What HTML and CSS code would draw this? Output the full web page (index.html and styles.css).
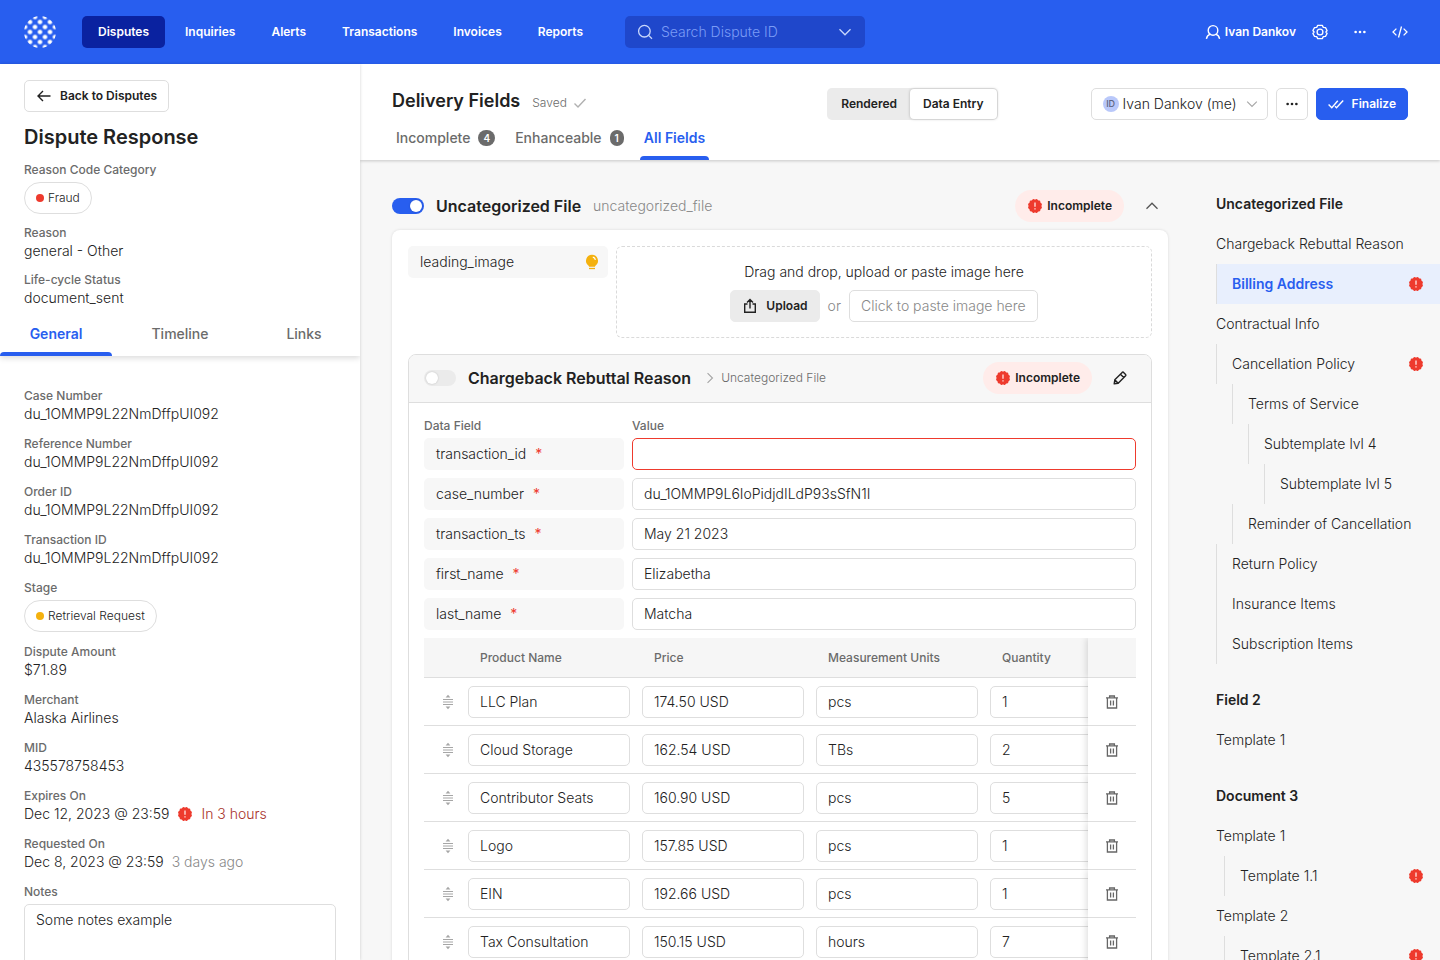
FILE: index.html
```html
<!DOCTYPE html>
<html lang="en">
<head>
    <meta charset="UTF-8">
    <meta name="viewport" content="width=device-width, initial-scale=1.0">
    <title>Dispute Response</title>
    <link rel="stylesheet" href="styles.css">
</head>
<body>
    <!-- Shared icons -->
    <svg class="sprite" aria-hidden="true">
        <symbol id="alert" viewBox="0 0 16 16">
            <g fill="#ee3a2d">
                <rect x="2.6" y="2.6" width="10.8" height="10.8" rx="1.3"/>
                <rect x="2.6" y="2.6" width="10.8" height="10.8" rx="1.3" transform="rotate(30 8 8)"/>
                <rect x="2.6" y="2.6" width="10.8" height="10.8" rx="1.3" transform="rotate(60 8 8)"/>
            </g>
            <path d="M8 4.6v4.2M8 10.2v1.3" stroke="#ffd9d5" stroke-width="1.4"/>
        </symbol>
        <symbol id="chevron" viewBox="0 0 16 16">
            <path d="M2.5 5.2 8 10.8l5.5-5.6" fill="none" stroke="currentColor" stroke-width="1.3"/>
        </symbol>
        <symbol id="dots" viewBox="0 0 16 16">
            <g fill="currentColor"><circle cx="3" cy="8" r="1.5"/><circle cx="8" cy="8" r="1.5"/><circle cx="13" cy="8" r="1.5"/></g>
        </symbol>
        <symbol id="drag" viewBox="0 0 16 16">
            <path d="M3 5.5h10M3 8h10M3 10.5h10" stroke="currentColor" stroke-width="1"/>
            <path d="M8 .8 10.4 3.4H5.6zM8 15.2l2.4-2.6H5.6z" fill="currentColor"/>
        </symbol>
        <symbol id="trash" viewBox="0 0 16 16">
            <path d="M2 3.9h12M5.6 3.7V2h4.8v1.7M3.4 4v10h9.2V4M6.6 6.5v5M9.4 6.5v5" fill="none" stroke="currentColor" stroke-width="1.3"/>
        </symbol>
    </svg>

    <header class="topbar">
        <a href="#" class="logo" aria-label="Home">
            <svg width="32" height="32" viewBox="0 0 32 32">
                <defs>
                    <pattern id="logoDots" x="3.5" y="3.5" width="10" height="10" patternUnits="userSpaceOnUse">
                        <circle cx="2.5" cy="2.5" r="2.3" fill="#fff"/>
                        <circle cx="7.5" cy="7.5" r="2.3" fill="#fff"/>
                    </pattern>
                </defs>
                <circle cx="16" cy="16" r="16" fill="url(#logoDots)"/>
            </svg>
        </a>
        <nav class="nav">
            <a href="#" class="active">Disputes</a>
            <a href="#">Inquiries</a>
            <a href="#">Alerts</a>
            <a href="#">Transactions</a>
            <a href="#">Invoices</a>
            <a href="#">Reports</a>
        </nav>
        <div class="search">
            <svg width="16" height="16" viewBox="0 0 16 16" fill="none" stroke="currentColor" stroke-width="1.3"><circle cx="7.4" cy="7.2" r="5.8"/><path d="m11.6 11.4 3.4 3.4"/></svg>
            <input type="search" placeholder="Search Dispute ID" aria-label="Search Dispute ID">
            <button type="button" aria-label="Search options"><svg width="16" height="16"><use href="#chevron"/></svg></button>
        </div>
        <div class="account">
            <button type="button" class="user">
                <svg width="16" height="16" viewBox="0 0 16 16" fill="none" stroke="currentColor" stroke-width="1.4"><circle cx="8" cy="6.4" r="4.8"/><path d="M1.4 14.8c.5-2.6 2-4 4-4.6M14.6 14.8c-.5-2.6-2-4-4-4.6"/></svg>
                Ivan Dankov
            </button>
            <button type="button" class="icon-btn" aria-label="Settings">
                <svg width="16" height="16" viewBox="0 0 16 16" fill="none" stroke="currentColor" stroke-width="1.3" stroke-linejoin="round"><circle cx="8" cy="8" r="2.9"/><path d="M5.7 1.4h4.6l1 2 2.2.2 1.6 2.9L13.9 8l1.2 1.5-1.6 2.9-2.2.2-1 2H5.7l-1-2-2.2-.2L.9 9.5 2.1 8 .9 6.5l1.6-2.9 2.2-.2z"/></svg>
            </button>
            <button type="button" class="icon-btn" aria-label="More"><svg width="14" height="14"><use href="#dots"/></svg></button>
            <button type="button" class="icon-btn" aria-label="Developer">
                <svg width="16" height="16" viewBox="0 0 16 16" fill="none" stroke="currentColor" stroke-width="1.3"><path d="M4.4 4.6 1 8l3.4 3.4M11.6 4.6 15 8l-3.4 3.4M9.5 2.5l-3 11"/></svg>
            </button>
        </div>
    </header>

    <div class="layout">
        <aside class="sidebar">
            <div class="summary">
                <a href="#" class="btn back">
                    <svg width="16" height="16" viewBox="0 0 16 16" fill="none" stroke="currentColor" stroke-width="1.4"><path d="M14.5 8h-12M7 3 2 8l5 5"/></svg>
                    Back to Disputes
                </a>
                <h1>Dispute Response</h1>
                <div class="field">
                    <h3>Reason Code Category</h3>
                    <span class="chip"><i class="dot red"></i>Fraud</span>
                </div>
                <div class="field">
                    <h3>Reason</h3>
                    <p>general - Other</p>
                </div>
                <div class="field">
                    <h3>Life-cycle Status</h3>
                    <p>document_sent</p>
                </div>
            </div>
            <nav class="side-tabs">
                <a href="#" class="active">General</a>
                <a href="#">Timeline</a>
                <a href="#">Links</a>
            </nav>
            <div class="details">
                <div class="field">
                    <h3>Case Number</h3>
                    <p>du_1OMMP9L22NmDffpUI092</p>
                </div>
                <div class="field">
                    <h3>Reference Number</h3>
                    <p>du_1OMMP9L22NmDffpUI092</p>
                </div>
                <div class="field">
                    <h3>Order ID</h3>
                    <p>du_1OMMP9L22NmDffpUI092</p>
                </div>
                <div class="field">
                    <h3>Transaction ID</h3>
                    <p>du_1OMMP9L22NmDffpUI092</p>
                </div>
                <div class="field">
                    <h3>Stage</h3>
                    <span class="chip"><i class="dot yellow"></i>Retrieval Request</span>
                </div>
                <div class="field">
                    <h3>Dispute Amount</h3>
                    <p>$71.89</p>
                </div>
                <div class="field">
                    <h3>Merchant</h3>
                    <p>Alaska Airlines</p>
                </div>
                <div class="field">
                    <h3>MID</h3>
                    <p>435578758453</p>
                </div>
                <div class="field">
                    <h3>Expires On</h3>
                    <p>Dec 12, 2023 @ 23:59 <svg width="16" height="16"><use href="#alert"/></svg> <span class="danger">In 3 hours</span></p>
                </div>
                <div class="field">
                    <h3>Requested On</h3>
                    <p>Dec 8, 2023 @ 23:59 <span class="muted">3 days ago</span></p>
                </div>
                <div class="field">
                    <label for="notes">Notes</label>
                    <textarea id="notes" rows="5">Some notes example</textarea>
                </div>
            </div>
        </aside>

        <main class="main">
            <div class="page-head">
                <div class="page-title">
                    <div class="title-row">
                        <h2>Delivery Fields</h2>
                        <span class="saved">Saved <svg width="14" height="14" viewBox="0 0 14 14" fill="none" stroke="#b0b0b0" stroke-width="1.4"><path d="m1.5 7.5 3.5 3.5 7.5-8"/></svg></span>
                    </div>
                    <nav class="tabs">
                        <a href="#">Incomplete <span class="count">4</span></a>
                        <a href="#">Enhanceable <span class="count">1</span></a>
                        <a href="#" class="active">All Fields</a>
                    </nav>
                </div>
                <div class="segmented">
                    <label><input type="radio" name="view"><span>Rendered</span></label>
                    <label><input type="radio" name="view" checked><span>Data Entry</span></label>
                </div>
                <div class="actions">
                    <div class="assignee">
                        <span class="avatar">ID</span>
                        <select aria-label="Assignee">
                            <option>Ivan Dankov (me)</option>
                        </select>
                        <svg width="14" height="14"><use href="#chevron"/></svg>
                    </div>
                    <button type="button" class="btn square" aria-label="More actions"><svg width="14" height="14"><use href="#dots"/></svg></button>
                    <button type="button" class="btn primary">
                        <svg width="16" height="16" viewBox="0 0 16 16" fill="none" stroke="currentColor" stroke-width="1.4"><path d="m.6 8.5 3.2 3.2 6-7M7 10.2l1.5 1.5 6.7-7.2"/></svg>
                        Finalize
                    </button>
                </div>
            </div>

            <div class="content">
                <section class="editor">
                    <div class="section-head">
                        <input type="checkbox" class="toggle" aria-label="Include Uncategorized File" checked>
                        <h3>Uncategorized File</h3>
                        <span class="key">uncategorized_file</span>
                        <span class="badge"><svg width="16" height="16"><use href="#alert"/></svg>Incomplete</span>
                        <button type="button" class="icon-btn collapse" aria-label="Collapse"><svg width="16" height="16"><use href="#chevron"/></svg></button>
                    </div>

                    <div class="card">
                        <div class="row">
                            <div class="name">
                                leading_image
                                <svg width="16" height="16" viewBox="0 0 16 16"><path d="M8 .8a6 6 0 0 0-3.7 10.7c.5.4.7.8.7 1.3h6c0-.5.2-.9.7-1.3A6 6 0 0 0 8 .8z" fill="#f4b10e"/><path d="M5 14.5h6" stroke="#f4b10e" stroke-width="1.3"/><path d="M8.8 3.2a3.2 3.2 0 0 1 2.6 2.6" fill="none" stroke="#fff" stroke-width="1.2"/></svg>
                            </div>
                            <div class="dropzone">
                                <p>Drag and drop, upload or paste image here</p>
                                <div class="drop-actions">
                                    <button type="button" class="btn soft">
                                        <svg width="16" height="16" viewBox="0 0 16 16" fill="none" stroke="currentColor" stroke-width="1.4"><path d="M5.5 6H2.7v8.300h10.6V6h-2.800M8 10.500V1.800M5 4.600l3-3 3 3"/></svg>
                                        Upload
                                    </button>
                                    <span>or</span>
                                    <button type="button" class="btn paste">Click to paste image here</button>
                                </div>
                            </div>
                        </div>

                        <div class="template">
                            <div class="template-head">
                                <input type="checkbox" class="toggle" aria-label="Include Chargeback Rebuttal Reason">
                                <h3>Chargeback Rebuttal Reason</h3>
                                <span class="crumb"><svg width="14" height="14"><use href="#chevron"/></svg>Uncategorized File</span>
                                <span class="badge"><svg width="16" height="16"><use href="#alert"/></svg>Incomplete</span>
                                <button type="button" class="icon-btn" aria-label="Edit">
                                    <svg width="16" height="16" viewBox="0 0 16 16" fill="none" stroke="currentColor" stroke-width="1.4" stroke-linejoin="round"><path d="M2.2 13.8 2.8 9.8l7.4-7.4q.7-.6 1.4 0l2 2q.6.7 0 1.4L6.2 13.2zM8.4 4.2l3.4 3.4M2.8 9.8l3.4 3.4"/></svg>
                                </button>
                            </div>
                            <div class="template-body">
                                <div class="row labels">
                                    <span>Data Field</span>
                                    <span>Value</span>
                                </div>
                                <div class="row">
                                    <label class="name" for="transaction_id">transaction_id <b>*</b></label>
                                    <input type="text" id="transaction_id" class="invalid">
                                </div>
                                <div class="row">
                                    <label class="name" for="case_number">case_number <b>*</b></label>
                                    <input type="text" id="case_number" value="du_1OMMP9L6IoPidjdILdP93sSfN1I">
                                </div>
                                <div class="row">
                                    <label class="name" for="transaction_ts">transaction_ts <b>*</b></label>
                                    <input type="text" id="transaction_ts" value="May 21 2023">
                                </div>
                                <div class="row">
                                    <label class="name" for="first_name">first_name <b>*</b></label>
                                    <input type="text" id="first_name" value="Elizabetha">
                                </div>
                                <div class="row">
                                    <label class="name" for="last_name">last_name <b>*</b></label>
                                    <input type="text" id="last_name" value="Matcha">
                                </div>

                                <div class="table-wrap">
                                    <table>
                                        <thead>
                                            <tr>
                                                <th class="drag-col"></th>
                                                <th>Product Name</th>
                                                <th>Price</th>
                                                <th>Measurement Units</th>
                                                <th>Quantity</th>
                                                <th class="sticky"></th>
                                            </tr>
                                        </thead>
                                        <tbody>
                                            <tr>
                                                <td class="drag"><svg width="16" height="16"><use href="#drag"/></svg></td>
                                                <td><input type="text" aria-label="Product Name" value="LLC Plan"></td>
                                                <td><input type="text" aria-label="Price" value="174.50 USD"></td>
                                                <td><input type="text" aria-label="Measurement Units" value="pcs"></td>
                                                <td><input type="text" aria-label="Quantity" value="1"></td>
                                                <td class="sticky"><button type="button" aria-label="Delete"><svg width="16" height="16"><use href="#trash"/></svg></button></td>
                                            </tr>
                                            <tr>
                                                <td class="drag"><svg width="16" height="16"><use href="#drag"/></svg></td>
                                                <td><input type="text" aria-label="Product Name" value="Cloud Storage"></td>
                                                <td><input type="text" aria-label="Price" value="162.54 USD"></td>
                                                <td><input type="text" aria-label="Measurement Units" value="TBs"></td>
                                                <td><input type="text" aria-label="Quantity" value="2"></td>
                                                <td class="sticky"><button type="button" aria-label="Delete"><svg width="16" height="16"><use href="#trash"/></svg></button></td>
                                            </tr>
                                            <tr>
                                                <td class="drag"><svg width="16" height="16"><use href="#drag"/></svg></td>
                                                <td><input type="text" aria-label="Product Name" value="Contributor Seats"></td>
                                                <td><input type="text" aria-label="Price" value="160.90 USD"></td>
                                                <td><input type="text" aria-label="Measurement Units" value="pcs"></td>
                                                <td><input type="text" aria-label="Quantity" value="5"></td>
                                                <td class="sticky"><button type="button" aria-label="Delete"><svg width="16" height="16"><use href="#trash"/></svg></button></td>
                                            </tr>
                                            <tr>
                                                <td class="drag"><svg width="16" height="16"><use href="#drag"/></svg></td>
                                                <td><input type="text" aria-label="Product Name" value="Logo"></td>
                                                <td><input type="text" aria-label="Price" value="157.85 USD"></td>
                                                <td><input type="text" aria-label="Measurement Units" value="pcs"></td>
                                                <td><input type="text" aria-label="Quantity" value="1"></td>
                                                <td class="sticky"><button type="button" aria-label="Delete"><svg width="16" height="16"><use href="#trash"/></svg></button></td>
                                            </tr>
                                            <tr>
                                                <td class="drag"><svg width="16" height="16"><use href="#drag"/></svg></td>
                                                <td><input type="text" aria-label="Product Name" value="EIN"></td>
                                                <td><input type="text" aria-label="Price" value="192.66 USD"></td>
                                                <td><input type="text" aria-label="Measurement Units" value="pcs"></td>
                                                <td><input type="text" aria-label="Quantity" value="1"></td>
                                                <td class="sticky"><button type="button" aria-label="Delete"><svg width="16" height="16"><use href="#trash"/></svg></button></td>
                                            </tr>
                                            <tr>
                                                <td class="drag"><svg width="16" height="16"><use href="#drag"/></svg></td>
                                                <td><input type="text" aria-label="Product Name" value="Tax Consultation"></td>
                                                <td><input type="text" aria-label="Price" value="150.15 USD"></td>
                                                <td><input type="text" aria-label="Measurement Units" value="hours"></td>
                                                <td><input type="text" aria-label="Quantity" value="7"></td>
                                                <td class="sticky"><button type="button" aria-label="Delete"><svg width="16" height="16"><use href="#trash"/></svg></button></td>
                                            </tr>
                                        </tbody>
                                    </table>
                                </div>
                            </div>
                        </div>
                    </div>
                </section>

                <nav class="outline">
                    <h4>Uncategorized File</h4>
                    <ul>
                        <li><a href="#">Chargeback Rebuttal Reason</a>
                            <ul>
                                <li><a href="#" class="active">Billing Address <svg width="16" height="16"><use href="#alert"/></svg></a></li>
                            </ul>
                        </li>
                        <li><a href="#">Contractual Info</a>
                            <ul>
                                <li><a href="#">Cancellation Policy <svg width="16" height="16"><use href="#alert"/></svg></a>
                                    <ul>
                                        <li><a href="#">Terms of Service</a>
                                            <ul>
                                                <li><a href="#">Subtemplate lvl 4</a>
                                                    <ul>
                                                        <li><a href="#">Subtemplate lvl 5</a></li>
                                                    </ul>
                                                </li>
                                            </ul>
                                        </li>
                                        <li><a href="#">Reminder of Cancellation</a></li>
                                    </ul>
                                </li>
                                <li><a href="#">Return Policy</a></li>
                                <li><a href="#">Insurance Items</a></li>
                                <li><a href="#">Subscription Items</a></li>
                            </ul>
                        </li>
                    </ul>
                    <h4>Field 2</h4>
                    <ul>
                        <li><a href="#">Template 1</a></li>
                    </ul>
                    <h4>Document 3</h4>
                    <ul class="inset">
                        <li><a href="#">Template 1</a>
                            <ul>
                                <li><a href="#">Template 1.1 <svg width="16" height="16"><use href="#alert"/></svg></a></li>
                            </ul>
                        </li>
                        <li><a href="#">Template 2</a>
                            <ul>
                                <li><a href="#">Template 2.1 <svg width="16" height="16"><use href="#alert"/></svg></a></li>
                            </ul>
                        </li>
                    </ul>
                </nav>
            </div>
        </main>
    </div>
</body>
</html>
```

FILE: styles.css
```css
:root {
    --blue: #285eef;
    --navy: #0a22a0;
    --red: #ee3a2d;
    --text: #222222;
    --label: #6b6b6b;
    --muted: #888888;
    --border: #dedede;
    --bg: #f7f7f7;
}

* {
    margin: 0;
    padding: 0;
    box-sizing: border-box;
}

body {
    height: 100vh;
    display: flex;
    flex-direction: column;
    overflow: hidden;
    background: var(--bg);
    color: var(--text);
    font: 300 14px/20px Inter, sans-serif;
}

a {
    color: inherit;
    text-decoration: none;
}

button, input, select, textarea {
    font: inherit;
    color: inherit;
}

button {
    border: none;
    background: none;
    cursor: pointer;
}

svg {
    display: block;
    flex-shrink: 0;
}

.sprite {
    display: none;
}

/* Top bar */
.topbar {
    display: flex;
    align-items: center;
    height: 64px;
    flex-shrink: 0;
    padding: 0 24px;
    background: var(--blue);
    color: #fff;
    font-size: 12px;
    font-weight: 600;
}

.nav {
    display: flex;
    gap: 4px;
    margin: 0 26px;
}

.nav a {
    padding: 6px 16px;
    border-radius: 5px;
}

.nav a.active {
    background: var(--navy);
}

.search {
    display: flex;
    align-items: center;
    gap: 8px;
    width: 240px;
    height: 32px;
    padding: 0 12px;
    border-radius: 5px;
    background: #1f47cb;
    color: #c9d7fc;
}

.search input {
    flex: 1;
    min-width: 0;
    border: none;
    outline: none;
    background: none;
    font-size: 14px;
    font-weight: 300;
}

.search input::placeholder {
    color: #7b9cf6;
}

.account {
    display: flex;
    align-items: center;
    gap: 8px;
    margin-left: auto;
}

.user {
    display: flex;
    align-items: center;
    gap: 4px;
}

.icon-btn {
    display: flex;
    align-items: center;
    justify-content: center;
    width: 32px;
    height: 32px;
}

.layout {
    display: flex;
    flex: 1;
    min-height: 0;
}

/* Sidebar */
.sidebar {
    display: flex;
    flex-direction: column;
    width: 360px;
    flex-shrink: 0;
    background: #fff;
    box-shadow: 0 0 3px rgba(0, 0, 0, 0.18);
    z-index: 2;
}

.summary {
    display: flex;
    flex-direction: column;
    align-items: flex-start;
    gap: 11px;
    padding: 16px 24px 0;
}

.summary h1 {
    font-size: 20px;
    line-height: 28px;
    font-weight: 600;
}

.field h3, .field label {
    display: block;
    color: var(--label);
    font-size: 12px;
    line-height: 16px;
    font-weight: 500;
}

.field p {
    display: flex;
    align-items: center;
    gap: 8px;
}

.chip {
    display: inline-flex;
    align-items: center;
    gap: 4px;
    height: 32px;
    margin-top: 4px;
    padding: 0 11px;
    border: 1px solid var(--border);
    border-radius: 16px;
    font-size: 12px;
    vertical-align: top;
}

.dot {
    width: 8px;
    height: 8px;
    border-radius: 50%;
}

.dot.red {
    background: var(--red);
}

.dot.yellow {
    background: #f4b10e;
}

.muted {
    color: var(--muted);
}

.danger {
    color: #a8322a;
}

.side-tabs {
    display: flex;
    gap: 12px;
    flex-shrink: 0;
    margin-top: 4px;
    box-shadow: 0 2px 6px rgba(0, 0, 0, 0.15);
    clip-path: inset(0 0 -12px 0);
}

.side-tabs a {
    position: relative;
    flex: 1;
    padding: 12px 0;
    text-align: center;
    color: var(--label);
    font-weight: 500;
}

.side-tabs a.active, .tabs a.active {
    color: var(--blue);
    font-weight: 600;
}

.side-tabs a.active::after, .tabs a.active::after {
    content: "";
    position: absolute;
    left: 0;
    right: 0;
    bottom: 0;
    height: 4px;
    border-radius: 4px 4px 0 0;
    background: var(--blue);
}

.details {
    display: flex;
    flex-direction: column;
    gap: 12px;
    flex: 1;
    min-height: 0;
    padding: 32px 24px 24px;
    overflow-y: auto;
    scrollbar-width: none;
}

.details .field {
    flex-shrink: 0;
}

textarea {
    display: block;
    width: 100%;
    margin-top: 4px;
    padding: 5px 11px;
    border: 1px solid var(--border);
    border-radius: 5px;
    resize: none;
}

/* Buttons */
.btn {
    display: inline-flex;
    align-items: center;
    justify-content: center;
    gap: 8px;
    height: 32px;
    padding: 0 11px;
    border: 1px solid var(--border);
    border-radius: 5px;
    background: #fff;
    font-size: 12px;
    font-weight: 600;
}

.btn.square {
    width: 32px;
    padding: 0;
}

.btn.primary {
    border-color: var(--blue);
    background: var(--blue);
    color: #fff;
}

.btn.soft {
    border-color: #ebebeb;
    background: #ebebeb;
}

.btn.paste {
    color: var(--muted);
    font-size: 14px;
    font-weight: 300;
}

/* Main header */
.main {
    display: flex;
    flex-direction: column;
    flex: 1;
    min-width: 0;
}

.page-head {
    display: flex;
    align-items: flex-start;
    flex-shrink: 0;
    padding: 24px 32px 0;
    background: #fff;
    box-shadow: 0 1px 3px rgba(0, 0, 0, 0.2);
    z-index: 1;
}

.title-row {
    display: flex;
    align-items: center;
    gap: 12px;
}

.title-row h2 {
    font-size: 18px;
    line-height: 26px;
    font-weight: 600;
}

.saved {
    display: flex;
    align-items: center;
    gap: 6px;
    padding-top: 4px;
    color: var(--label);
    font-size: 12px;
}

.tabs {
    display: flex;
    gap: 12px;
    margin-top: 4px;
}

.tabs a {
    position: relative;
    display: flex;
    align-items: center;
    gap: 8px;
    padding: 10px 4px 12px;
    color: var(--label);
    font-weight: 500;
}

.count {
    padding: 0 5px;
    border-radius: 8px;
    background: var(--label);
    color: #fff;
    font-size: 10px;
    line-height: 16px;
    font-weight: 600;
}

.segmented {
    display: flex;
    height: 32px;
    margin-left: auto;
    padding: 1px;
    border-radius: 5px;
    background: #ebebeb;
    font-size: 12px;
    font-weight: 600;
}

.segmented input {
    appearance: none;
    position: absolute;
}

.segmented span {
    display: block;
    padding: 5px 13px;
    border-radius: 4px;
    cursor: pointer;
}

.segmented input:checked + span {
    background: #fff;
    box-shadow: 0 0 3px rgba(0, 0, 0, 0.25);
}

.actions {
    display: flex;
    gap: 8px;
    margin-left: 93px;
}

.assignee {
    display: flex;
    align-items: center;
    gap: 4px;
    height: 32px;
    padding: 0 8px 0 11px;
    border: 1px solid var(--border);
    border-radius: 5px;
}

.assignee select {
    appearance: none;
    border: none;
    background: none;
    outline: none;
    padding-right: 4px;
}

.assignee svg {
    color: #a6a6a6;
}

.avatar {
    width: 16px;
    height: 16px;
    border-radius: 50%;
    background: #b9c8fa;
    color: #5d6480;
    font-size: 9px;
    line-height: 16px;
    font-weight: 500;
    text-align: center;
}

/* Editor */
.content {
    display: flex;
    flex: 1;
    min-height: 0;
    padding-left: 32px;
    overflow-y: auto;
    scrollbar-width: none;
}

.editor {
    flex: 1;
    min-width: 0;
    padding-top: 30px;
}

.section-head, .template-head {
    display: flex;
    align-items: center;
    gap: 12px;
}

.section-head {
    margin-bottom: 8px;
}

.section-head h3, .template-head h3 {
    font-size: 16px;
    line-height: 24px;
    font-weight: 600;
}

.key {
    color: var(--muted);
}

.toggle {
    appearance: none;
    width: 32px;
    height: 16px;
    padding: 2px;
    border-radius: 8px;
    background: #ebebeb;
    cursor: pointer;
}

.toggle::before {
    content: "";
    display: block;
    width: 12px;
    height: 12px;
    border-radius: 50%;
    background: #fff;
    box-shadow: 0 0 2px rgba(0, 0, 0, 0.2);
}

.toggle:checked {
    background: var(--blue);
}

.toggle:checked::before {
    margin-left: auto;
}

.badge {
    display: flex;
    align-items: center;
    gap: 4px;
    height: 32px;
    margin-left: auto;
    padding: 0 12px;
    border-radius: 16px;
    background: #ffecea;
    font-size: 12px;
    font-weight: 600;
}

.collapse svg {
    transform: rotate(180deg);
    color: #555;
}

.card {
    padding: 16px;
    border-radius: 8px;
    background: #fff;
    box-shadow: 0 0 3px rgba(0, 0, 0, 0.12);
}

.row {
    display: grid;
    grid-template-columns: 200px 1fr;
    gap: 8px;
    align-items: start;
}

.name {
    display: flex;
    align-items: center;
    gap: 9px;
    height: 32px;
    padding: 0 8px 0 12px;
    border-radius: 5px;
    background: var(--bg);
}

.name svg {
    margin-left: auto;
}

.name b {
    color: var(--red);
    font-weight: 400;
}

.dropzone {
    display: flex;
    flex-direction: column;
    align-items: center;
    gap: 8px;
    padding: 15px;
    border: 1px dashed #dadada;
    border-radius: 6px;
}

.drop-actions {
    display: flex;
    align-items: center;
    gap: 8px;
    color: var(--muted);
}

.drop-actions .soft {
    color: var(--text);
}

.template {
    margin-top: 16px;
    border: 1px solid var(--border);
    border-radius: 8px;
    overflow: hidden;
}

.template-head {
    height: 48px;
    padding: 0 15px 1px;
    border-bottom: 1px solid var(--border);
    background: var(--bg);
}

.crumb {
    display: flex;
    align-items: center;
    gap: 4px;
    color: var(--label);
    font-size: 12px;
}

.crumb svg {
    transform: rotate(-90deg);
    color: #a6a6a6;
}

.template-body {
    display: flex;
    flex-direction: column;
    gap: 8px;
    padding: 15px;
}

.labels {
    margin-bottom: -4px;
    color: var(--label);
    font-size: 12px;
    line-height: 16px;
    font-weight: 500;
}

input[type="text"] {
    display: block;
    width: 100%;
    height: 32px;
    padding: 0 11px;
    border: 1px solid var(--border);
    border-radius: 5px;
    background: #fff;
    outline: none;
}

.row input[type="text"] {
    padding-bottom: 1px;
}

input[type="text"].invalid {
    border-color: var(--red);
}

.table-wrap {
    overflow-x: auto;
    scrollbar-width: none;
}

table {
    width: 100%;
    min-width: 788px;
    table-layout: fixed;
    border-collapse: separate;
    border-spacing: 0;
}

th, td {
    height: 48px;
    padding-right: 12px;
    border-bottom: 1px solid var(--border);
    background: #fff;
}

th {
    height: 40px;
    padding: 0 12px;
    background: #f6f6f6;
    color: var(--label);
    font-size: 12px;
    font-weight: 500;
    text-align: left;
}

.drag-col {
    width: 44px;
}

.drag {
    padding-left: 16px;
    color: #a6a6a6;
}

.sticky {
    position: sticky;
    right: 0;
    width: 48px;
    padding: 0;
    box-shadow: -2px 0 6px rgba(0, 0, 0, 0.12);
    clip-path: inset(0 0 0 -12px);
}

.sticky button {
    display: block;
    margin: 0 auto;
    color: #666;
}

/* Outline */
.outline {
    width: 272px;
    flex-shrink: 0;
    padding: 24px 0 24px 48px;
}

.outline h4 {
    font-size: 14px;
    line-height: 40px;
    font-weight: 600;
}

.outline ul {
    list-style: none;
}

.outline > ul {
    margin-bottom: 16px;
}

.outline a {
    display: flex;
    align-items: center;
    justify-content: space-between;
    height: 40px;
    padding-right: 16px;
}

.outline ul ul a {
    padding-left: 15px;
    border-left: 1px solid var(--border);
}

.outline ul ul ul {
    margin-left: 16px;
}

.outline .inset ul {
    margin-left: 8px;
}

.outline a.active {
    background: #e8effd;
    color: var(--blue);
    font-weight: 600;
}
```
